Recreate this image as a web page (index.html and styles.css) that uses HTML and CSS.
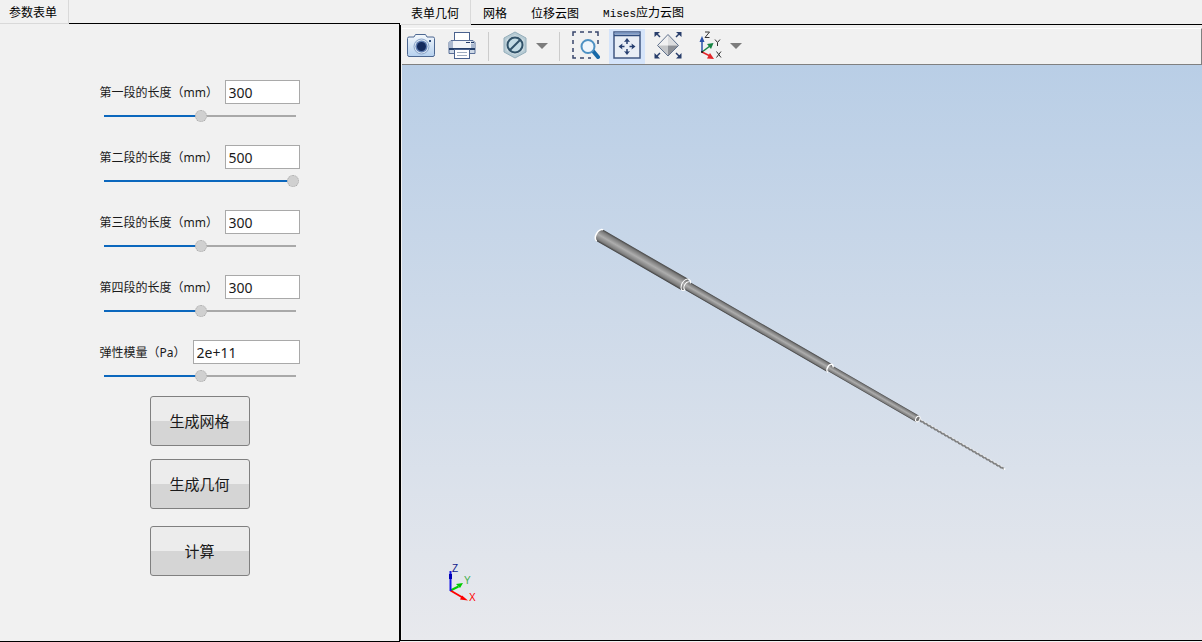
FILE: index.html
```html
<!DOCTYPE html>
<html lang="zh-CN">
<head>
<meta charset="utf-8">
<title>参数表单</title>
<link rel="stylesheet" href="styles.css">
</head>
<body>
<div class="app">
  <section class="panel params">
    <div class="tabs" role="tablist">
      <button class="tab active" role="tab" aria-selected="true">参数表单</button>
    </div>
    <form class="panel-body form">
      <div class="field">
        <div class="field-row"><label for="len1">第一段的长度（mm）</label><input class="text" id="len1" type="text" value="300"></div>
        <input class="slider" type="range" min="100" max="500" value="300" aria-label="第一段的长度（mm）">
      </div>
      <div class="field">
        <div class="field-row"><label for="len2">第二段的长度（mm）</label><input class="text" id="len2" type="text" value="500"></div>
        <input class="slider full" type="range" min="100" max="500" value="500" aria-label="第二段的长度（mm）">
      </div>
      <div class="field">
        <div class="field-row"><label for="len3">第三段的长度（mm）</label><input class="text" id="len3" type="text" value="300"></div>
        <input class="slider" type="range" min="100" max="500" value="300" aria-label="第三段的长度（mm）">
      </div>
      <div class="field">
        <div class="field-row"><label for="len4">第四段的长度（mm）</label><input class="text" id="len4" type="text" value="300"></div>
        <input class="slider" type="range" min="100" max="500" value="300" aria-label="第四段的长度（mm）">
      </div>
      <div class="field">
        <div class="field-row"><label for="modulus">弹性模量（Pa）</label><input class="text wide" id="modulus" type="text" value="2e+11"></div>
        <input class="slider" type="range" min="0" max="4" value="2" aria-label="弹性模量（Pa）">
      </div>
      <div class="actions">
        <button class="action" type="button">生成网格</button>
        <button class="action" type="button">生成几何</button>
        <button class="action last" type="button">计算</button>
      </div>
    </form>
  </section>

  <section class="panel result">
    <div class="tabs" role="tablist">
      <button class="tab active" role="tab" aria-selected="true">表单几何</button>
      <button class="tab" role="tab">网格</button>
      <button class="tab" role="tab">位移云图</button>
      <button class="tab" role="tab"><span class="mono">Mises</span>应力云图</button>
    </div>
    <div class="panel-body viewer">
      <div class="toolbar">
        <button class="tool" aria-label="截图">
          <svg viewBox="0 0 28 28">
            <defs>
              <linearGradient id="metal" x1="0" y1="0" x2="0" y2="1"><stop offset="0" stop-color="#f4f8fc"/><stop offset="1" stop-color="#b5d0ee"/></linearGradient>
            </defs>
            <path d="M.5 7.500Q.5 6 2 6H7l1.500-2.500h10L20 6h6q1.500 0 1.500 1.500v16q0 2-1.500 2h-24q-1.500 0-1.500-2z" fill="url(#metal)" stroke="#4c6791"/>
            <circle cx="14.500" cy="15.500" r="7.500" fill="#d9e5f3" stroke="#8ba5c9"/>
            <circle cx="14.500" cy="15.500" r="6" fill="#5f7db0"/>
            <circle cx="14.500" cy="15.500" r="4.500" fill="#142a5c"/>
            <rect x="22" y="9" width="2" height="2" fill="#34517f"/>
          </svg>
        </button>
        <button class="tool" aria-label="打印">
          <svg viewBox="0 0 28 28">
            <rect x="6.500" y="1.500" width="15" height="10" fill="#fff" stroke="#4a628e"/>
            <path d="M3 9.500h22l2 2V22.500H1V11.500z" fill="#cfd9e6" stroke="#5a7099"/>
            <path d="M5 10h18v7H5z" fill="#f1f4f8"/>
            <path d="M1 10h4v7H1zM23 13h4v4h-4z" fill="#a9b8cf"/>
            <path d="M1 18h26" stroke="#243f6b" stroke-width="2"/>
            <path d="M18 11.500h8" stroke="#233b69" stroke-dasharray="4 1"/>
            <rect x="6.500" y="18.500" width="15" height="9" fill="#fff" stroke="#4a628e"/>
            <path d="M9 21.500h10M9 24.500h10" stroke="#9eacbf"/>
          </svg>
        </button>
        <span class="sep"></span>
        <div class="split">
          <button class="tool" aria-label="隐藏">
            <svg viewBox="0 0 28 28">
              <path d="M14 1l11 6v14l-11 6-11-6V7z" fill="#b7cbd4" stroke="#93adba"/>
              <path d="M14 4l8.500 4.500v11L14 24l-8.500-4.500v-11z" fill="#d2e0e6"/>
              <circle cx="14" cy="14" r="7.500" fill="#c4dce5" stroke="#315269" stroke-width="2"/>
              <path d="M8.500 19.500l11-11" stroke="#315269" stroke-width="2"/>
            </svg>
          </button>
          <button class="drop" aria-label="更多"><svg viewBox="0 0 12 6"><path d="M0 0h12L6 6z" fill="#7c7c7c"/></svg></button>
        </div>
        <span class="sep"></span>
        <button class="tool" aria-label="框选缩放">
          <svg viewBox="0 0 28 28">
            <path d="M1 5V1h3M8 1h4M16 1h4M23 1h3v4M26 9v4M1 9v4M1 17v4M1 24v3h3M8 27h4M16 27h3" fill="none" stroke="#38456b" stroke-width="1.500"/>
            <path d="M21 20l5 6" stroke="#1869a7" stroke-width="4" stroke-linecap="round"/>
            <circle cx="16" cy="15.500" r="6.500" fill="#eff5fb" stroke="#4e91c3" stroke-width="2"/>
          </svg>
        </button>
        <button class="tool on" aria-label="适应窗口">
          <svg viewBox="0 0 28 28">
            <rect x="1" y="1" width="26" height="26" fill="#e9eef5" stroke="#405781" stroke-width="1.500"/>
            <path d="M1.500 1.500h25v2h-25z" fill="#7f9cc8"/><path d="M1 4.500h26" stroke="#304d7e" stroke-width="1.500"/>
            <path d="M14 9v4M14 18v4M8 15.500h3.500M16.500 15.500H20" stroke="#263f70" stroke-width="1.500"/>
            <path d="M14 7l3 4q-3-1-6 0zM14 24l3-4q-3 1-6 0zM5.500 15.500l4-3q-1 3 0 6zM22.500 15.500l-4-3q1 3 0 6z" fill="#263f70"/>
          </svg>
        </button>
        <button class="tool" aria-label="全部显示">
          <svg viewBox="0 0 28 28">
            <path d="M14 3.500L3.500 14.500H14z" fill="#f0f0f1"/><path d="M14 3.500l10.500 11H14z" fill="#dcdddf"/>
            <path d="M3.500 14.500L14 25V14.500z" fill="#c3c5c8"/><path d="M24.500 14.500L14 25V14.500z" fill="#8d9096"/>
            <path d="M14 3.500L3.500 14.500 14 25l10.500-10.500z" fill="none" stroke="#60718d"/>
            <path d="M2 2l4 4M26 2l-4 4M2 26l4-4M26 26l-4-4" stroke="#283e6b" stroke-width="1.500"/>
            <path d="M.5 1h5.500l-5.500 5zM27.500 1H22l5.500 5zM.5 27.500H6L.5 22zM27.500 27.500H22l5.500-5.500z" fill="#283e6b"/>
          </svg>
        </button>
        <div class="split">
          <button class="tool" aria-label="视角">
            <svg viewBox="0 0 28 28">
              <path d="M7 21V9" stroke="#2850a7" stroke-width="1.500"/><path d="M7 5l2.500 6h-5z" fill="#2850a7"/>
              <path d="M7 21l8-6" stroke="#168443" stroke-width="1.500"/><path d="M18.500 12l-2.500 6-4-5z" fill="#168443"/>
              <path d="M7 21l8 4" stroke="#e32528" stroke-width="1.500"/><path d="M19 28l-7-.5 3-5.500z" fill="#e32528"/>
              <circle cx="7" cy="21" r="1" fill="#111"/>
              <path d="M10 1h4.500L10 6.500h4.500M20 8.500l2.500 3 2.500-3M22.500 11.500V15M21.500 20.500l4.500 6M26 20.500l-4.500 6" fill="none" stroke="#333"/>
            </svg>
          </button>
          <button class="drop" aria-label="更多视角"><svg viewBox="0 0 12 6"><path d="M0 0h12L6 6z" fill="#7c7c7c"/></svg></button>
        </div>
      </div>
      <div class="view">
        <svg class="scene" viewBox="402 65 800 575" role="img" aria-label="几何模型">
          <defs>
            <linearGradient id="rod" x1="0" y1="0" x2="0" y2="1">
              <stop offset="0" stop-color="#444"/><stop offset=".15" stop-color="#7a7a7a"/><stop offset=".5" stop-color="#adadad"/><stop offset=".85" stop-color="#7c7c7c"/><stop offset="1" stop-color="#3c3c3c"/>
            </linearGradient>
          </defs>
          <g transform="translate(600 235.500) rotate(30)">
            <path d="M366 0h101" stroke="#858585" stroke-width="2"/>
            <path d="M366-1h100" stroke="#f4f4f4" stroke-dasharray="2 2"/>
            <path d="M366 1h100" stroke="#444" stroke-width=".5" stroke-dasharray="2 2"/>
            <path d="M265-3.500H366a2 3.500 0 0 1 0 7H265z" fill="url(#rod)"/>
            <path d="M97-4.500H264a2 4.500 0 0 1 0 9H97z" fill="url(#rod)"/>
            <path d="M0-6.500H97a4 6.500 0 0 1 0 13H0a4 6.500 0 0 1 0-13z" fill="url(#rod)"/>
            <path d="M0-6.500a4 6.500 0 0 0 0 13" fill="none" stroke="#fff" stroke-width="1.500"/>
            <path d="M99-6.500a4 6.500 0 0 0 0 13M101-4.500a3 4.500 0 0 0 0 9M99-6.500q3 0 3 3M99 6.500l2-2" fill="none" stroke="#fff"/>
            <path d="M266-4.500a3 4.500 0 0 0 0 9M266-4.500l2 2" fill="none" stroke="#fff" stroke-width="1.500"/>
            <ellipse cx="367" cy="0" rx="2" ry="3" fill="#777" stroke="#fff"/>
            <circle cx="467" cy="0" r="1" fill="#fff"/>
          </g>
          <g class="triad">
            <path d="M450.500 590.500l8-4" stroke="#0c0" stroke-width="2"/><path d="M463 583l-3 5-4-4z" fill="#0c0"/>
            <path d="M450.500 590.500l12 7" stroke="#f00" stroke-width="2"/><path d="M468 600.500l-8-1 2-4z" fill="#f00"/>
            <path d="M450.500 591v-20" stroke="#1717e6" stroke-width="2"/><path d="M449 574h3v5h-3z" fill="#0000b8"/>
            <text x="452" y="572" fill="#111b8d">Z</text>
            <text x="464" y="584" fill="#3fae4a">Y</text>
            <text x="469" y="601" fill="#f00">X</text>
          </g>
        </svg>
      </div>
    </div>
  </section>
</div>
</body>
</html>
```
FILE: styles.css
```css
* {
  box-sizing: border-box;
}

body {
  margin: 0;
  background: #f1f1f1;
  color: #1a1a1a;
  font: 12px/16px "Noto Sans", "Noto Sans CJK SC", sans-serif;
}

button,
input {
  font: inherit;
  color: inherit;
  margin: 0;
}

.app {
  display: grid;
  grid-template-columns: 400px minmax(0, 1fr);
  min-height: 100vh;
}

.panel {
  display: flex;
  flex-direction: column;
}

.tabs {
  display: flex;
  height: 24px;
  border-bottom: 1px solid #000;
}

.tab {
  padding: 0 12px;
  border: 0;
  background: none;
  font-family: "Noto Sans CJK SC", sans-serif;
  color: #000;
}

.tab.active {
  margin-bottom: -1px;
  padding: 0 11px 0 9px;
  border-right: 1px solid #d9d9d9;
  border-bottom: 1px solid #d9d9d9;
  background: #f1f1f1;
}

.mono {
  font: 11px/16px "Liberation Mono", monospace;
}

.panel-body {
  flex: 1;
}

.form {
  display: flex;
  flex-direction: column;
  align-items: center;
  padding-top: 56px;
  border-right: 1px solid #000;
  border-bottom: 1px solid #000;
}

.field {
  display: flex;
  flex-direction: column;
  gap: 6px;
  width: 200px;
  margin-bottom: 23px;
}

.field-row {
  display: flex;
  align-items: center;
  justify-content: space-between;
  white-space: nowrap;
}

.field-row label {
  padding-top: 2px;
}

.text {
  width: 75px;
  height: 24px;
  padding: 0 3px;
  border: 1px solid #a9a9a9;
  background: #fff;
  font-size: 14px;
}

.text.wide {
  width: 107px;
}

.slider {
  --fill: 50%;
  appearance: none;
  width: 196px;
  height: 12px;
  margin: 0 0 0 3px;
  background: linear-gradient(to right, #0b67bd var(--fill), #a9a9a9 var(--fill)) 1px center / 192px 2px no-repeat;
}

.slider.full {
  --fill: 100%;
}

.slider::-webkit-slider-thumb {
  appearance: none;
  width: 12px;
  height: 12px;
  border: 1px dotted #aaa;
  border-radius: 50%;
  background: #d0d0d0;
}

.actions {
  display: flex;
  flex-direction: column;
  gap: 13px;
  margin-top: -9px;
}

.action {
  width: 100px;
  height: 50px;
  border: 1px solid #808080;
  border-radius: 3px;
  background: linear-gradient(#ececec 51%, #d5d5d5 51%);
  font-size: 15px;
}

.action.last {
  margin-top: 4px;
}

.result .tabs {
  height: 25px;
  margin-left: 1px;
}

.result .tab {
  padding-top: 2px;
}

.result .tab.active {
  padding-left: 10px;
}

.viewer {
  display: flex;
  flex-direction: column;
  margin-bottom: 1px;
  padding: 3px 0 0 1px;
  border-left: 1px solid #000;
  border-bottom: 1px solid #000;
}

.toolbar {
  display: flex;
  align-items: center;
  gap: 5px;
  height: 37px;
  padding-left: 1px;
  border-top: 1px solid #fff;
  border-right: 1px solid #808080;
  border-bottom: 1px solid #808080;
}

.tool {
  width: 36px;
  height: 35px;
  padding: 2px 4px 5px;
  border: 0;
  background: none;
}

.tool.on {
  background: #d5e4fa;
}

.tool svg {
  display: block;
  width: 28px;
  height: 28px;
}

.split {
  display: flex;
}

.drop {
  width: 18px;
  padding: 0 3px 2px;
  border: 0;
  background: none;
}

.drop svg {
  display: block;
  width: 12px;
  height: 6px;
}

.sep {
  width: 1px;
  height: 29px;
  margin: 0 3px;
  background: #ccc;
}

.view {
  display: flex;
  flex: 1;
  background: linear-gradient(#b9cee6, #e8e9ed);
}

.scene {
  flex: 1;
  width: 100%;
  min-height: 0;
}

.triad text {
  font: 10px "Liberation Sans", sans-serif;
}
```
